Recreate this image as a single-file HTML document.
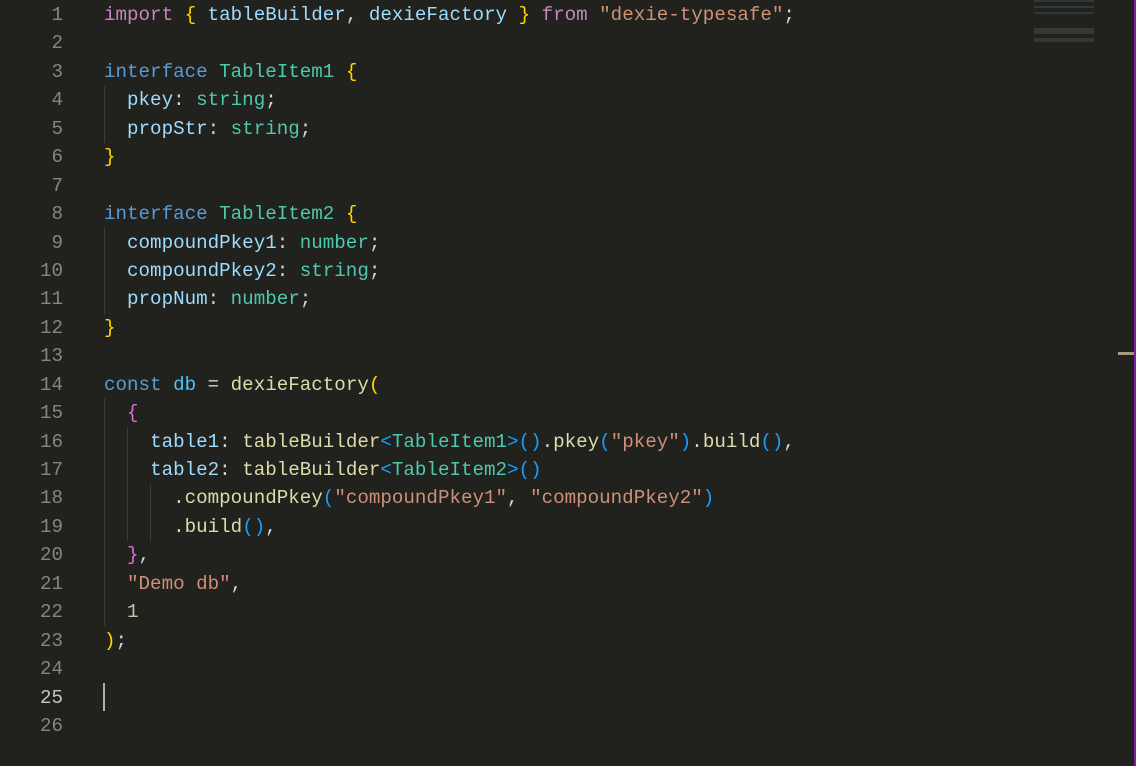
<!DOCTYPE html>
<html><head><meta charset="utf-8"><style>
html,body{margin:0;padding:0;}
body{width:1136px;height:766px;background:#21211d;overflow:hidden;position:relative;font-family:"Liberation Mono",monospace;font-size:19.2px;}
.ln{position:absolute;left:0;width:63px;text-align:right;color:#858585;}
.ln.a{color:#c6c6c6;}
.code{position:absolute;left:104px;white-space:pre;color:#d4d4d4;}
.row{position:absolute;height:28px;line-height:28px;}
.k{color:#c586c0}.b{color:#569cd6}.t{color:#4ec9b0}.v{color:#9cdcfe}.f{color:#dcdcaa}.s{color:#ce9178}.n{color:#b5cea8}.y{color:#ffd700}.p{color:#da70d6}.c{color:#179fff}.w{color:#d4d4d4}
.guide{position:absolute;width:1px;background:#3c3c38;}
</style></head><body>
<div class="guide" style="left:104px;top:86px;height:57px"></div>
<div class="guide" style="left:104px;top:228px;height:86px"></div>
<div class="guide" style="left:104px;top:398px;height:228px"></div>
<div class="guide" style="left:127px;top:427px;height:114px"></div>
<div class="guide" style="left:150px;top:484px;height:57px"></div>
<div id="L"></div>
<div style="position:absolute;left:103px;top:683px;width:2px;height:28px;background:#aeafad"></div>
<div style="position:absolute;left:1034px;top:0;width:60px;height:42px;opacity:.25;background:linear-gradient(#4a7a8a 0 2px,transparent 2px 6px,#5a8a7a 6px 8px,transparent 8px 12px,#4a7a8a 12px 14px,transparent 14px 28px,#6a8a7a 28px 34px,transparent 34px 38px,#6a7a8a 38px 40px);"></div>
<div style="position:absolute;left:1118px;top:352px;width:16px;height:3px;background:#a39a80"></div>
<div style="position:absolute;left:1134px;top:0;width:2px;height:766px;background:#7a1fa0"></div>
<script>
const lines=[
'<span class="k">import</span> <span class="y">{</span> <span class="v">tableBuilder</span>, <span class="v">dexieFactory</span> <span class="y">}</span> <span class="k">from</span> <span class="s">"dexie-typesafe"</span>;',
'',
'<span class="b">interface</span> <span class="t">TableItem1</span> <span class="y">{</span>',
'  <span class="v">pkey</span>: <span class="t">string</span>;',
'  <span class="v">propStr</span>: <span class="t">string</span>;',
'<span class="y">}</span>',
'',
'<span class="b">interface</span> <span class="t">TableItem2</span> <span class="y">{</span>',
'  <span class="v">compoundPkey1</span>: <span class="t">number</span>;',
'  <span class="v">compoundPkey2</span>: <span class="t">string</span>;',
'  <span class="v">propNum</span>: <span class="t">number</span>;',
'<span class="y">}</span>',
'',
'<span class="b">const</span> <span class="v" style="color:#4fc1ff">db</span> = <span class="f">dexieFactory</span><span class="y">(</span>',
'  <span class="p">{</span>',
'    <span class="v">table1</span>: <span class="f">tableBuilder</span><span class="c">&lt;</span><span class="t">TableItem1</span><span class="c">&gt;()</span>.<span class="f">pkey</span><span class="c">(</span><span class="s">"pkey"</span><span class="c">)</span>.<span class="f">build</span><span class="c">()</span>,',
'    <span class="v">table2</span>: <span class="f">tableBuilder</span><span class="c">&lt;</span><span class="t">TableItem2</span><span class="c">&gt;()</span>',
'      .<span class="f">compoundPkey</span><span class="c">(</span><span class="s">"compoundPkey1"</span>, <span class="s">"compoundPkey2"</span><span class="c">)</span>',
'      .<span class="f">build</span><span class="c">()</span>,',
'  <span class="p">}</span>,',
'  <span class="s">"Demo db"</span>,',
'  <span class="n">1</span>',
'<span class="y">)</span>;',
'',
'',
''];
let h='';
lines.forEach((l,i)=>{const top=1+i*28.44;
h+=`<div class="row ln${i==24?' a':''}" style="top:${top}px">${i+1}</div><div class="row code" style="top:${top}px">${l}</div>`;});
document.getElementById('L').innerHTML=h;
</script>
</body></html>
